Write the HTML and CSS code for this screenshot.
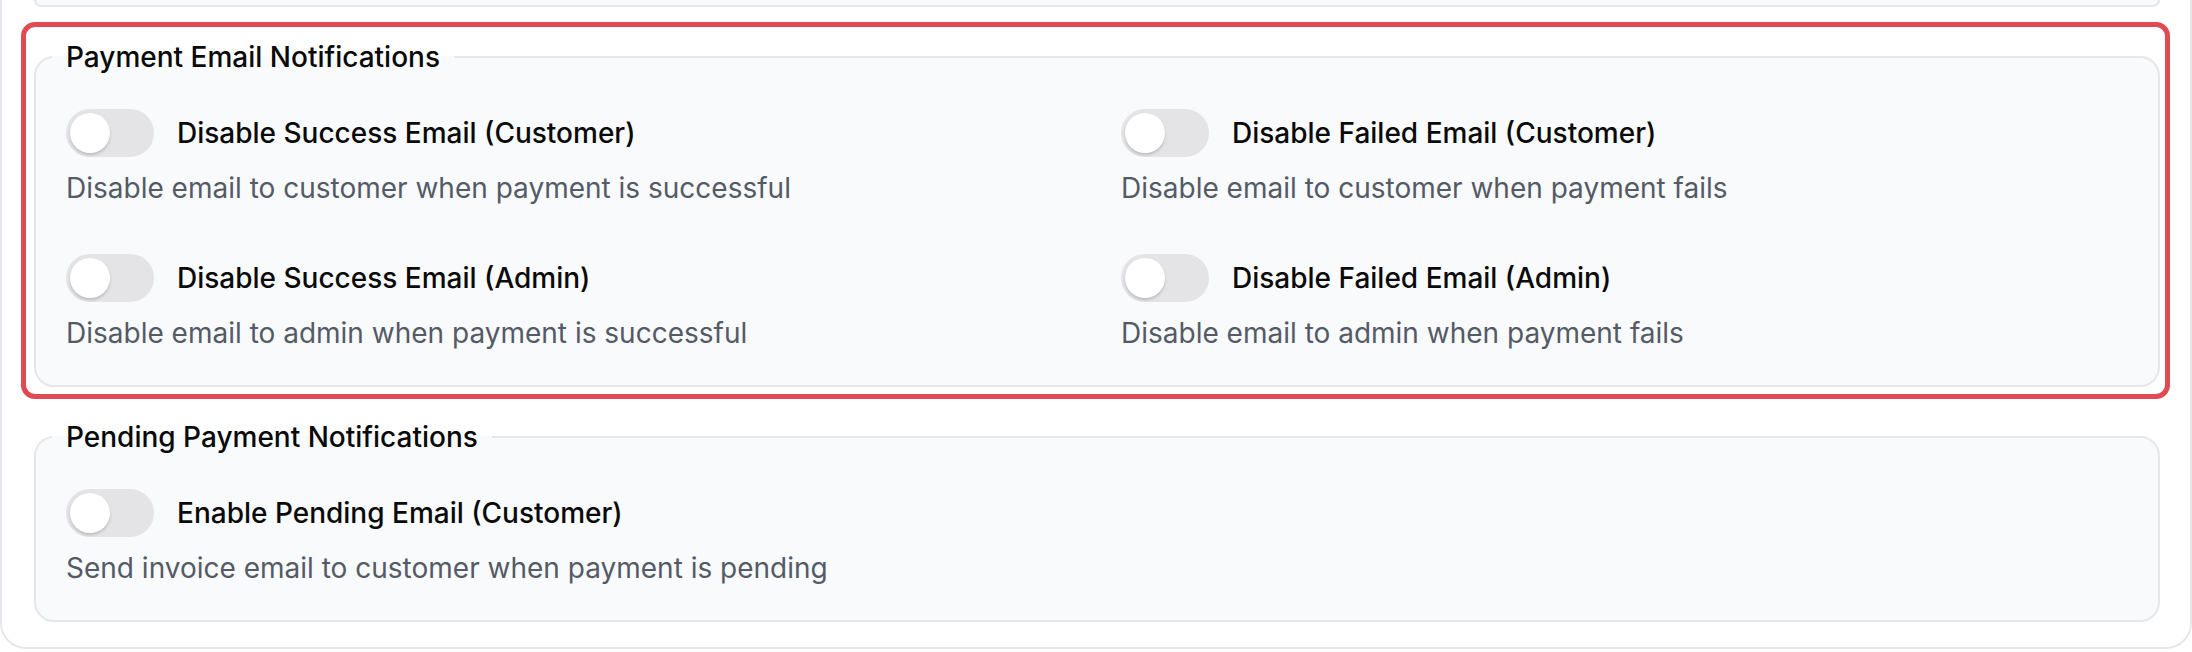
FILE: index.html
```html
<!DOCTYPE html>
<html>
<head>
    <title>Notification settings</title>
    <meta name="viewport" content="width=device-width,initial-scale=1.0">
    <link rel="stylesheet" href="styles.css">
</head>
<body>
    <div class="card">
        <div class="prev-section"></div>

        <div class="highlight">
            <fieldset class="group">
                <legend>Payment Email Notifications</legend>
                <div class="options two-col">
                    <div class="option">
                        <label class="option-head">
                            <span class="switch"><input type="checkbox"><span class="knob"></span></span>
                            <span class="option-title">Disable Success Email (Customer)</span>
                        </label>
                        <p class="option-desc">Disable email to customer when payment is successful</p>
                    </div>
                    <div class="option">
                        <label class="option-head">
                            <span class="switch"><input type="checkbox"><span class="knob"></span></span>
                            <span class="option-title">Disable Failed Email (Customer)</span>
                        </label>
                        <p class="option-desc">Disable email to customer when payment fails</p>
                    </div>
                    <div class="option">
                        <label class="option-head">
                            <span class="switch"><input type="checkbox"><span class="knob"></span></span>
                            <span class="option-title">Disable Success Email (Admin)</span>
                        </label>
                        <p class="option-desc">Disable email to admin when payment is successful</p>
                    </div>
                    <div class="option">
                        <label class="option-head">
                            <span class="switch"><input type="checkbox"><span class="knob"></span></span>
                            <span class="option-title">Disable Failed Email (Admin)</span>
                        </label>
                        <p class="option-desc">Disable email to admin when payment fails</p>
                    </div>
                </div>
            </fieldset>
        </div>

        <fieldset class="group">
            <legend>Pending Payment Notifications</legend>
            <div class="options">
                <div class="option">
                    <label class="option-head">
                        <span class="switch"><input type="checkbox"><span class="knob"></span></span>
                        <span class="option-title">Enable Pending Email (Customer)</span>
                    </label>
                    <p class="option-desc">Send invoice email to customer when payment is pending</p>
                </div>
            </div>
        </fieldset>
    </div>
</body>
</html>
```

FILE: styles.css
```css
body{
    margin: 0;
    background: #ffffff;
    font-family: "Inter", "Noto Sans", sans-serif;
    color: #0a0a0a;
}

.card{
    border: 2px solid #e5e7eb;
    border-top: 0;
    border-radius: 0 0 26px 26px;
    padding: 0 30px 25px 32px;
    background: #ffffff;
}

.prev-section{
    height: 5px;
    border: 2px solid #e5e7eb;
    border-top: 0;
    border-radius: 0 0 20px 20px;
    background: #f8fafc;
    margin-bottom: 30px;
}

.highlight{
    position: relative;
    margin-bottom: 30px;
}

/* annotation frame drawn over the first group */
.highlight:after{
    content: "";
    position: absolute;
    top: -15px;
    bottom: -12px;
    left: -13px;
    right: -10px;
    border: 5px solid #e04a52;
    border-radius: 14px;
    pointer-events: none;
}

.group{
    margin: 0;
    min-width: 0;
    padding: 32px 30px 32px 30px;
    border: 2px solid #e5e7eb;
    border-radius: 20px;
    background: #f8fafc;
}

.group legend{
    padding: 0 14px;
    margin-left: -14px;
    font-size: 28px;
    line-height: 40px;
    font-weight: 500;
    color: #0a0a0a;
}

.options{
    display: grid;
    row-gap: 46px;
}

.options.two-col{
    grid-template-columns: 1fr 1fr;
    column-gap: 48px;
}

.option-head{
    display: flex;
    align-items: center;
    gap: 23px;
    cursor: pointer;
}

.option-title{
    font-size: 28px;
    line-height: 40px;
    font-weight: 500;
    color: #0a0a0a;
}

.option-desc{
    margin: 11px 0 0;
    font-size: 28px;
    line-height: 40px;
    color: #545a66;
}

.switch{
    position: relative;
    flex: none;
    width: 88px;
    height: 48px;
    border-radius: 24px;
    background: #e4e4e7;
}

.switch input{
    position: absolute;
    opacity: 0;
    margin: 0;
    width: 100%;
    height: 100%;
}

.switch .knob{
    position: absolute;
    top: 4px;
    left: 4px;
    width: 40px;
    height: 40px;
    border-radius: 50%;
    background: #ffffff;
    box-shadow: 0 2px 3px rgba(0, 0, 0, 0.18);
}
```
